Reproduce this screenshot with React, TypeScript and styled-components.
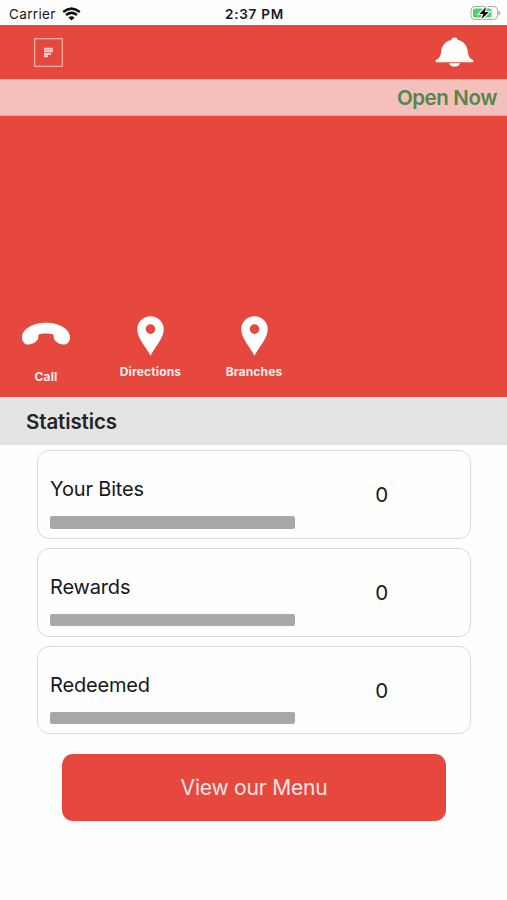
import React from "react";
import styled, { createGlobalStyle } from "styled-components";

const RED = "#e7483d";

const GlobalStyle = createGlobalStyle`
  * { box-sizing: border-box; }
  body { margin: 0; background: #fefefe; font-family: Inter, "Liberation Sans", sans-serif; color: #17171a; }
`;

const Screen = styled.main`
  width: 507px;
  height: 900px;
  display: flex;
  flex-direction: column;
  overflow: hidden;
  background: #fefefe;
`;

const StatusBar = styled.header`
  height: 25px;
  flex: none;
  display: grid;
  grid-template-columns: 1fr auto 1fr;
  align-items: center;
  padding: 2px 6px 0 9px;
  line-height: 16px;
`;

const Carrier = styled.div`
  display: flex;
  align-items: center;
  gap: 6px;
  font-size: 13.5px;
  letter-spacing: 0.35px;
`;

const Clock = styled.div`
  font-size: 13.5px;
  font-weight: 600;
  letter-spacing: 0.75px;
  margin-right: 1px;
`;

const BatterySlot = styled.div`
  display: flex;
  justify-content: flex-end;
  margin-top: -2px;
`;

const NavBar = styled.nav`
  height: 54px;
  flex: none;
  display: flex;
  align-items: center;
  justify-content: space-between;
  padding: 0 33px 0 34px;
  background: ${RED};
`;

const IconButton = styled.button`
  display: flex;
  padding: 0;
  border: 0;
  background: none;
`;

const OpenStrip = styled.div`
  height: 37px;
  flex: none;
  display: flex;
  align-items: center;
  justify-content: flex-end;
  padding: 0 10px 0 0;
  background: #f5c0bc;
  border-top: 1px solid #f2aaa4;
  border-bottom: 1px solid #f1a39d;
  color: #538650;
  font-size: 20.5px;
  font-weight: 600;
  letter-spacing: -0.4px;
`;

const Hero = styled.section`
  height: 281px;
  flex: none;
  display: flex;
  align-items: flex-end;
  gap: 43px;
  padding: 0 0 17px 22px;
  background: ${RED};
`;

const Action = styled.button<{ $width: number; $gap: number; $shift?: number; $after?: number }>`
  width: ${(p) => p.$width}px;
  display: flex;
  flex-direction: column;
  align-items: center;
  gap: ${(p) => p.$gap}px;
  margin: 0 ${(p) => p.$after ?? 0}px ${(p) => -(p.$shift ?? 0)}px 0;
  padding: 0;
  border: 0;
  background: none;
  color: #fdeeec;
  font: 700 12px/16px Inter, "Liberation Sans", sans-serif;
  letter-spacing: 0.15px;
  white-space: nowrap;
`;

const SectionTitle = styled.h2`
  height: 48px;
  flex: none;
  margin: 0;
  display: flex;
  align-items: center;
  padding-left: 26px;
  background: #e4e4e4;
  color: #242424;
  font-size: 20.5px;
  font-weight: 600;
  letter-spacing: -0.12px;
`;

const CardList = styled.section`
  display: flex;
  flex-direction: column;
  gap: 9px;
  padding: 5px 36.5px 0 37px;
`;

const Card = styled.article`
  height: 88.8px;
  display: flex;
  padding-left: 12px;
  border: 1.5px solid #dadada;
  border-radius: 12px;
`;

const CardMain = styled.div`
  width: 245px;
  display: flex;
  flex-direction: column;
`;

const Label = styled.div`
  margin-top: 25px;
  height: 26px;
  line-height: 26px;
  font-size: 20px;
  letter-spacing: -0.16px;
`;

const Track = styled.div`
  height: 12.5px;
  margin-top: 14px;
  border-radius: 2px;
  background: #a8a8a8;
`;

const Value = styled.div`
  flex: 1;
  margin: 31px 1px 0 0;
  line-height: 26px;
  text-align: center;
  font-size: 20.5px;
`;

const MenuButton = styled.button`
  width: 384px;
  height: 67px;
  flex: none;
  margin: 20px 0 0 62px;
  padding: 1px 0 0;
  border: 0;
  border-radius: 11px;
  background: ${RED};
  color: #fde6e4;
  font: 400 21px/26px Inter, "Liberation Sans", sans-serif;
  letter-spacing: -0.2px;
`;

const WifiIcon = () => (
  <svg width="19" height="14" viewBox="0 0 19 14" fill="none" stroke="#111" strokeWidth="2.5">
    <path d="M1.2 4.9Q9.5-1.7 17.8 4.9M4 8Q9.5 3.7 15 8" />
    <path d="M9.5 13.5 6.4 10.4Q9.5 7.9 12.6 10.4Z" fill="#111" stroke="none" />
  </svg>
);

const BatteryIcon = () => (
  <svg width="31" height="16" viewBox="0 0 31 16">
    <rect x="1" y="1.5" width="26.5" height="13" rx="4" fill="#fff" stroke="#aaa" />
    <path d="M28.5 5.5q2 1 2 2.5t-2 2.5z" fill="#aaa" />
    <rect x="3" y="3.5" width="18.5" height="9" rx="2" fill="#4bd265" />
    <path d="M16.2 1.8 9.2 9h4L11.5 14.2 19 7h-4.2z" fill="#111" stroke="#fff" strokeWidth="2.2" paintOrder="stroke" />
  </svg>
);

const MenuIcon = () => (
  <svg width="29" height="29" viewBox="0 0 29 29">
    <rect x=".7" y=".7" width="27.6" height="27.6" fill="none" stroke="#f7b4ad" strokeWidth="1.2" />
    <path d="M10 10.7h9M10 13.3h9M10 15.9h7M10 18.2h4" stroke="#fbd2ce" strokeWidth="2" />
  </svg>
);

const BellIcon = () => (
  <svg width="39" height="30" viewBox="0 0 39 30" fill="#fff">
    <path d="M19.5.5c2 0 3 1 3.2 2.5 6.1 1.2 9.4 5.4 10.1 11.5.4 4.5 1.8 6.7 4.8 8.2 1.4.8 1.2 2.5-.5 2.5H1.9c-1.7 0-1.9-1.7-.5-2.5 3-1.5 4.4-3.7 4.8-8.2C6.9 8.4 10.2 4.2 16.3 3 16.5 1.5 17.5.5 19.5.5zM14 26.2h11c-.8 2.2-2.5 3.4-5.5 3.4s-4.7-1.2-5.5-3.4z" />
  </svg>
);

const PhoneIcon = () => (
  <svg width="48" height="24" viewBox="0 0 48 24" fill="#fff">
    <path d="M24 .8C36 .8 48 6.5 48 15.5 48 20 45 22.8 41.2 22.5 36.5 22 33 19.5 32 16.8 31.3 14.8 32.4 13.2 30.7 12.2 28.5 11.2 19.5 11.2 17.3 12.2 15.6 13.2 16.7 14.8 16 16.8 15 19.5 11.5 22 6.8 22.5 3 22.8 0 20 0 15.5 0 6.5 12 .8 24 .8z" />
  </svg>
);

const PinIcon = () => (
  <svg width="27" height="40" viewBox="0 0 27 40" fill="#fff">
    <path fillRule="evenodd" d="M13.5.3C6 .3.3 6 .3 13.2.3 22 8 29.5 13.5 39.7 19 29.5 26.7 22 26.7 13.2 26.7 6 21 .3 13.5.3zm0 8a4.8 4.8 0 1 1 0 9.6 4.8 4.8 0 0 1 0-9.6z" />
  </svg>
);

const stats = [
  { label: "Your Bites", value: 0 },
  { label: "Rewards", value: 0 },
  { label: "Redeemed", value: 0 },
];

export default function App() {
  return (
    <>
      <GlobalStyle />
      <Screen>
        <StatusBar>
          <Carrier>Carrier <WifiIcon /></Carrier>
          <Clock>2:37 PM</Clock>
          <BatterySlot><BatteryIcon /></BatterySlot>
        </StatusBar>
        <NavBar>
          <IconButton aria-label="Menu"><MenuIcon /></IconButton>
          <IconButton aria-label="Notifications"><BellIcon /></IconButton>
        </NavBar>
        <OpenStrip>Open Now</OpenStrip>
        <Hero>
          <Action $width={48} $gap={23} $shift={5} $after={6}><PhoneIcon />Call</Action>
          <Action $width={63} $gap={8}><PinIcon />Directions</Action>
          <Action $width={58} $gap={8}><PinIcon />Branches</Action>
        </Hero>
        <SectionTitle>Statistics</SectionTitle>
        <CardList>
          {stats.map((s) => (
            <Card key={s.label}>
              <CardMain>
                <Label>{s.label}</Label>
                <Track />
              </CardMain>
              <Value>{s.value}</Value>
            </Card>
          ))}
        </CardList>
        <MenuButton>View our Menu</MenuButton>
      </Screen>
    </>
  );
}
